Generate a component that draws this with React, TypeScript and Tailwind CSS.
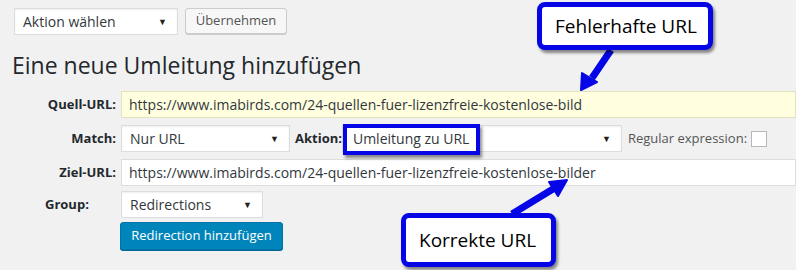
import React from "react";

const font = { fontFamily: '"Open Sans", "Noto Sans", sans-serif' };

const Caret = () => (
  <span className="text-[9px] leading-none text-[#222]">▼</span>
);

const Select = ({ value, className }: { value: string; className: string }) => (
  <div
    className={`flex items-center justify-between h-[27px] pl-[8px] pr-[10px] bg-white border border-[#dddddd] shadow-[inset_0_1px_2px_rgba(0,0,0,0.07)] text-[14px] text-[#32373c] ${className}`}
  >
    <span>{value}</span>
    <Caret />
  </div>
);

const Label = ({ children }: { children: React.ReactNode }) => (
  <div className="w-[121px] shrink-0 text-right pr-[5px] text-[13px] font-bold text-[#23282d]">
    {children}
  </div>
);

const Callout = ({ text, className }: { text: string; className: string }) => (
  <div
    className={`absolute flex items-center bg-white border-[5px] border-[#0505e6] rounded-[8px] shadow-[2px_3px_3px_rgba(0,0,0,0.45)] text-[19px] text-black ${className}`}
    style={{ fontFamily: '"Open Sans", "Noto Sans", sans-serif' }}
  >
    {text}
  </div>
);

export default function App() {
  return (
    <div
      className="relative w-[796px] h-[270px] overflow-hidden bg-[#f1f1f1] text-[#23282d]"
      style={font}
    >
      <div className="flex gap-[7px] pt-[8px] pl-[14px]">
        <Select value="Aktion wählen" className="w-[164px]" />
        <div className="flex items-center justify-center w-[102px] h-[26px] bg-[#f7f7f7] border border-[#cccccc] rounded-[3px] shadow-[0_1px_0_#cccccc] text-[13px] text-[#555555]">
          Übernehmen
        </div>
      </div>

      <h1 className="pl-[12px] pt-[15px] text-[23px] leading-[30px] font-normal text-[#23282d]">
        Eine neue Umleitung hinzufügen
      </h1>

      <div className="flex flex-col gap-[7px] pt-[11px]">
        <div className="flex items-center">
          <Label>Quell-URL:</Label>
          <div className="flex-1 flex items-center h-[27px] pl-[7px] bg-[#ffffe0] border border-[#e2e2c0] text-[14px] text-[#32373c] whitespace-nowrap">
            https://www.imabirds.com/24-quellen-fuer-lizenzfreie-kostenlose-bild
          </div>
        </div>

        <div className="flex items-center">
          <Label>Match:</Label>
          <Select value="Nur URL" className="w-[169px]" />
          <div className="pl-[5px] pr-0 text-[13px] font-bold text-[#23282d]">Aktion:</div>
          <div className="relative">
            <Select value="Umleitung zu URL" className="w-[280px] !pl-[10px]" />
            <div className="absolute left-[1px] top-[-1px] w-[137px] h-[31px] border-[4px] border-[#0505e6] shadow-[2px_3px_3px_rgba(0,0,0,0.45)]" />
          </div>
          <div className="pl-[6px] text-[13px] text-[#555555]">Regular expression:</div>
          <div className="ml-[4px] w-[16px] h-[16px] bg-white border border-[#b4b9be]" />
        </div>

        <div className="flex items-center">
          <Label>Ziel-URL:</Label>
          <div className="flex-1 flex items-center h-[27px] pl-[7px] bg-white border border-[#dddddd] text-[14px] text-[#32373c] whitespace-nowrap">
            https://www.imabirds.com/24-quellen-fuer-lizenzfreie-kostenlose-bilder
          </div>
        </div>
      </div>

      <div className="flex items-center pt-[5px]">
        <div className="w-[121px] shrink-0 pl-[45px] text-[13px] font-bold text-[#23282d]">Group:</div>
        <Select value="Redirections" className="w-[142px]" />
      </div>

      <div className="pl-[120px] pt-[4px]">
        <div className="flex items-center justify-center w-[163px] h-[28px] bg-[#0085ba] border border-[#0073aa] rounded-[3px] shadow-[0_1px_0_#006799] text-[13px] text-white">
          Redirection hinzufügen
        </div>
      </div>

      <svg className="absolute left-0 top-0" width="796" height="270" viewBox="0 0 796 270">
        <g fill="#0505e6" stroke="#0505e6" strokeLinejoin="round">
          <line x1="611" y1="50" x2="592" y2="78" strokeWidth="7" />
          <polygon points="581,90 582,73 597,82" strokeWidth="2" />
          <line x1="512" y1="214" x2="553" y2="189" strokeWidth="7" />
          <polygon points="567,180 549,182 558,196" strokeWidth="2" />
        </g>
      </svg>

      <Callout text="Fehlerhafte URL" className="left-[537px] top-[2px] w-[176px] h-[48px] pl-[13px]" />
      <Callout text="Korrekte URL" className="left-[401px] top-[213px] w-[155px] h-[54px] pl-[13px]" />
    </div>
  );
}
